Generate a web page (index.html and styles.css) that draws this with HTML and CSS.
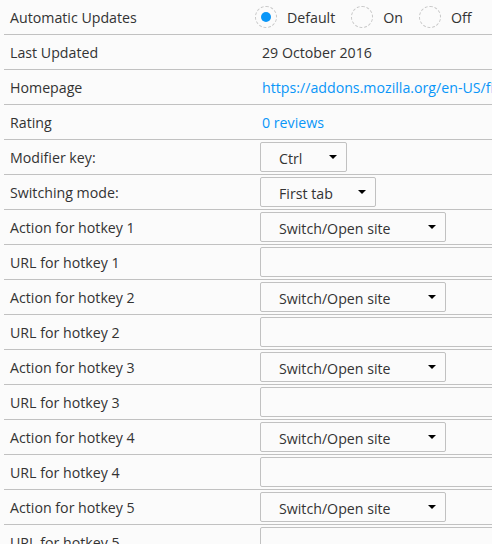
FILE: index.html
```html
<!DOCTYPE html>
<html>
<head>
<meta charset="utf-8">
<link rel="stylesheet" href="styles.css">
</head>
<body>
<div class="list">
  <div class="row">
    <div class="label">Automatic Updates</div>
    <div class="value radios">
      <span class="radio"><span class="circle checked"></span><span class="rtext">Default</span></span>
      <span class="radio"><span class="circle"></span><span class="rtext">On</span></span>
      <span class="radio"><span class="circle"></span><span class="rtext">Off</span></span>
    </div>
  </div>
  <div class="row">
    <div class="label">Last Updated</div>
    <div class="value text">29 October 2016</div>
  </div>
  <div class="row">
    <div class="label">Homepage</div>
    <div class="value text"><a class="link" href="#">https://addons.mozilla.org/en-US/firefox/addon/hotkeys/</a></div>
  </div>
  <div class="row">
    <div class="label">Rating</div>
    <div class="value text"><a class="link" href="#">0 reviews</a></div>
  </div>
  <div class="row">
    <div class="label">Modifier key:</div>
    <div class="value"><div class="select w-ctrl"><span>Ctrl</span><span class="arrow"></span></div></div>
  </div>
  <div class="row">
    <div class="label">Switching mode:</div>
    <div class="value"><div class="select w-mode"><span>First tab</span><span class="arrow"></span></div></div>
  </div>
  <div class="row">
    <div class="label">Action for hotkey 1</div>
    <div class="value"><div class="select w-action"><span>Switch/Open site</span><span class="arrow"></span></div></div>
  </div>
  <div class="row">
    <div class="label">URL for hotkey 1</div>
    <div class="value"><div class="input"></div></div>
  </div>
  <div class="row">
    <div class="label">Action for hotkey 2</div>
    <div class="value"><div class="select w-action"><span>Switch/Open site</span><span class="arrow"></span></div></div>
  </div>
  <div class="row">
    <div class="label">URL for hotkey 2</div>
    <div class="value"><div class="input"></div></div>
  </div>
  <div class="row">
    <div class="label">Action for hotkey 3</div>
    <div class="value"><div class="select w-action"><span>Switch/Open site</span><span class="arrow"></span></div></div>
  </div>
  <div class="row">
    <div class="label">URL for hotkey 3</div>
    <div class="value"><div class="input"></div></div>
  </div>
  <div class="row">
    <div class="label">Action for hotkey 4</div>
    <div class="value"><div class="select w-action"><span>Switch/Open site</span><span class="arrow"></span></div></div>
  </div>
  <div class="row">
    <div class="label">URL for hotkey 4</div>
    <div class="value"><div class="input"></div></div>
  </div>
  <div class="row">
    <div class="label">Action for hotkey 5</div>
    <div class="value"><div class="select w-action"><span>Switch/Open site</span><span class="arrow"></span></div></div>
  </div>
  <div class="row">
    <div class="label">URL for hotkey 5</div>
    <div class="value"><div class="input"></div></div>
  </div>
</div>
</body>
</html>
```
FILE: styles.css
```css
html, body {
  margin: 0;
  padding: 0;
  background: #fbfbfb;
  overflow: hidden;
}
body {
  font-family: "Open Sans", "Noto Sans", sans-serif;
  font-size: 14.2px;
  color: #333;
}
.list {
  margin-left: 4px;
}
.row {
  display: grid;
  grid-template-columns: 256px 1fr;
  height: 34px;
  border-bottom: 1px solid #c1c1c1;
  align-items: center;
}
.label {
  padding-left: 6px;
  white-space: nowrap;
}
.value {
  white-space: nowrap;
  overflow: visible;
  min-width: 0;
}
.text {
  padding-left: 2px;
  overflow: hidden;
}
.link {
  color: #0996f8;
  text-decoration: none;
}
.radios {
  display: flex;
  align-items: center;
}
.radio {
  display: flex;
  align-items: center;
}
.circle {
  width: 22px;
  height: 22px;
  border: 1px dashed #c8c8c8;
  border-radius: 50%;
  box-sizing: border-box;
  display: flex;
  align-items: center;
  justify-content: center;
  margin-left: -5px;
}
.checked::after {
  content: "";
  width: 10px;
  height: 10px;
  border-radius: 50%;
  background: #0996f8;
}
.rtext {
  margin-left: 10px;
  margin-right: 21px;
}
.select {
  display: flex;
  align-items: center;
  justify-content: space-between;
  height: 30px;
  box-sizing: border-box;
  border: 1px solid #c1c1c1;
  border-radius: 2px;
  padding: 2px 9px 0 18px;
}
.w-ctrl { width: 87px; }
.w-mode { width: 116px; }
.w-action { width: 186px; }
.arrow {
  width: 0;
  height: 0;
  border-left: 4px solid transparent;
  border-right: 4px solid transparent;
  border-top: 4px solid #000;
  margin-top: -2px;
}
.input {
  width: 300px;
  height: 30px;
  box-sizing: border-box;
  border: 1px solid #c1c1c1;
  border-radius: 2px;
  background: #fbfbfb;
}
```
